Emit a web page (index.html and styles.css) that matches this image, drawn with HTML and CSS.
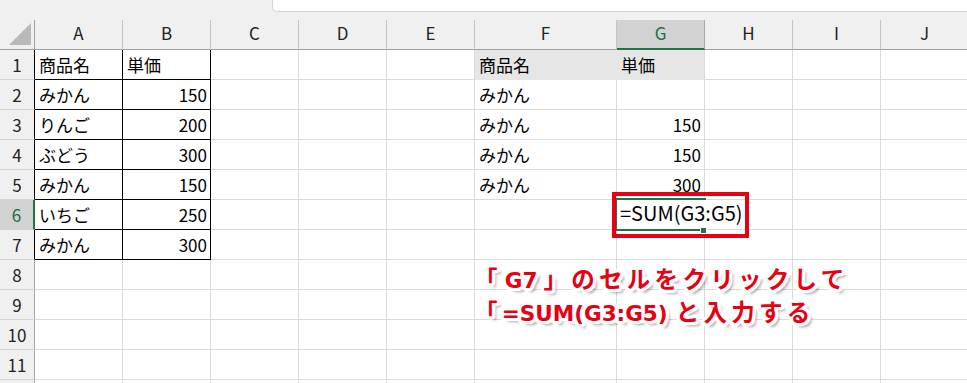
FILE: index.html
```html
<!DOCTYPE html>
<html lang="ja">
<head>
<meta charset="utf-8">
<title>Excel SUM</title>
<link rel="stylesheet" href="styles.css">
</head>
<body>
<div class="app">
  <div class="top"><div class="fbar"></div></div>
  <div class="sheet">
    <div class="corner"><svg class="selall" width="22" height="22" viewBox="0 0 22 22"><polygon points="0,22 22,22 22,0" fill="#b9b9b9"/></svg></div>
    <div class="ch">A</div><div class="ch">B</div><div class="ch">C</div><div class="ch">D</div><div class="ch">E</div><div class="ch">F</div><div class="ch sel">G</div><div class="ch">H</div><div class="ch">I</div><div class="ch">J</div>

    <div class="rh t">1</div><div class="c t">商品名</div><div class="c t">単価</div><div class="c"></div><div class="c"></div><div class="c"></div><div class="c f">商品名</div><div class="c f g1">単価</div><div class="c"></div><div class="c"></div><div class="c"></div>

    <div class="rh t">2</div><div class="c t">みかん</div><div class="c t n">150</div><div class="c"></div><div class="c"></div><div class="c"></div><div class="c">みかん</div><div class="c"></div><div class="c"></div><div class="c"></div><div class="c"></div>

    <div class="rh t">3</div><div class="c t">りんご</div><div class="c t n">200</div><div class="c"></div><div class="c"></div><div class="c"></div><div class="c">みかん</div><div class="c n">150</div><div class="c"></div><div class="c"></div><div class="c"></div>

    <div class="rh t">4</div><div class="c t">ぶどう</div><div class="c t n">300</div><div class="c"></div><div class="c"></div><div class="c"></div><div class="c">みかん</div><div class="c n">150</div><div class="c"></div><div class="c"></div><div class="c"></div>

    <div class="rh t">5</div><div class="c t">みかん</div><div class="c t n">150</div><div class="c"></div><div class="c"></div><div class="c"></div><div class="c">みかん</div><div class="c n">300</div><div class="c"></div><div class="c"></div><div class="c"></div>

    <div class="rh t sel">6</div><div class="c t">いちご</div><div class="c t n">250</div><div class="c"></div><div class="c"></div><div class="c"></div><div class="c"></div><div class="c formula">=SUM(G3:G5)</div><div class="c"></div><div class="c"></div><div class="c"></div>

    <div class="rh t">7</div><div class="c t">みかん</div><div class="c t n">300</div><div class="c"></div><div class="c"></div><div class="c"></div><div class="c"></div><div class="c"></div><div class="c"></div><div class="c"></div><div class="c"></div>

    <div class="rh">8</div><div class="c"></div><div class="c"></div><div class="c"></div><div class="c"></div><div class="c"></div><div class="c"></div><div class="c"></div><div class="c"></div><div class="c"></div><div class="c"></div>

    <div class="rh">9</div><div class="c"></div><div class="c"></div><div class="c"></div><div class="c"></div><div class="c"></div><div class="c"></div><div class="c"></div><div class="c"></div><div class="c"></div><div class="c"></div>

    <div class="rh">10</div><div class="c"></div><div class="c"></div><div class="c"></div><div class="c"></div><div class="c"></div><div class="c"></div><div class="c"></div><div class="c"></div><div class="c"></div><div class="c"></div>

    <div class="rh">11</div><div class="c"></div><div class="c"></div><div class="c"></div><div class="c"></div><div class="c"></div><div class="c"></div><div class="c"></div><div class="c"></div><div class="c"></div><div class="c"></div>

    <div class="rh"></div><div class="c"></div><div class="c"></div><div class="c"></div><div class="c"></div><div class="c"></div><div class="c"></div><div class="c"></div><div class="c"></div><div class="c"></div><div class="c"></div>
  </div>

  <div class="active"></div>
  <div class="redbox"></div>

  <div class="note">
    <div class="line">「<span class="lat g7">G7</span>」のセルをクリックして</div>
    <div class="line">「<span class="lat sum">=SUM(G3:G5)</span>と入力する</div>
  </div>
</div>
</body>
</html>
```

FILE: styles.css
```css
html, body {
  margin: 0;
  padding: 0;
  background: #ffffff;
  overflow: hidden;
}

.app {
  position: relative;
  width: 967px;
  height: 383px;
  overflow: hidden;
  font-family: "Noto Sans CJK JP", "Noto Sans", sans-serif;
  color: #000;
}

.top {
  height: 20px;
  background: #f0f0f0;
}

.fbar {
  margin-left: 272px;
  height: 12px;
  box-sizing: border-box;
  background: #ffffff;
  border-left: 1px solid #d4d4d4;
  border-bottom: 1px solid #d4d4d4;
  border-bottom-left-radius: 5px;
}

.sheet {
  display: grid;
  grid-template-columns: 35px repeat(5, 88px) 142px repeat(4, 88px);
  grid-auto-rows: 30px;
  background: #ffffff;
}

.sheet > div {
  box-sizing: border-box;
  border-right: 1px solid #dadada;
  border-bottom: 1px solid #dadada;
  font-size: 17px;
  line-height: 29px;
  white-space: nowrap;
  overflow: hidden;
}

.corner {
  background: #f0f0f0;
  border-right-color: #9f9f9f !important;
  border-bottom-color: #9f9f9f !important;
  display: flex;
  align-items: flex-start;
}

.selall {
  margin: 3px 0 0 9px;
  display: block;
}

.ch {
  background: #f0f0f0;
  text-align: center;
  color: #222;
  line-height: 25px !important;
  border-right-color: #c4c4c4 !important;
  border-bottom-color: #9f9f9f !important;
}

.ch.sel {
  background: #d2d2d2;
  color: #1d6b40;
  border-bottom: 2px solid #217346 !important;
  border-right-color: #a8a8a8 !important;
}

.rh {
  background: #f0f0f0;
  text-align: center;
  color: #222;
  border-right-color: #a6a6a6 !important;
  border-bottom-color: #d4d4d4 !important;
}

.rh.t {
  border-right-color: #000 !important;
}

.rh.sel {
  background: #d2d2d2;
  color: #1d6b40;
  border-right: 2px solid #217346 !important;
}

.c {
  padding: 0 3px 0 4px;
}

.c.n {
  text-align: right;
}

.c.t {
  border-right-color: #000;
  border-bottom-color: #000;
}

.c.f {
  background: #e7e6e6;
  border-right-color: #e7e6e6;
  border-bottom-color: #e7e6e6;
}

.c.f.g1 {
  border-right-color: #dadada;
}

.c.formula {
  overflow: visible;
  font-size: 20px;
  line-height: 26px;
  border-right-color: #ffffff;
  padding-left: 3px;
}

.active {
  position: absolute;
  left: 615px;
  top: 198px;
  width: 91px;
  height: 33px;
  box-sizing: border-box;
  border-top: 2px solid #217346;
  border-bottom: 2px solid #217346;
  border-left: 2px solid #217346;
}

.active::after {
  content: "";
  position: absolute;
  right: 0;
  bottom: -4px;
  width: 5px;
  height: 5px;
  background: #217346;
  outline: 1px solid #fff;
}

.redbox {
  position: absolute;
  left: 612px;
  top: 192px;
  width: 137px;
  height: 46px;
  box-sizing: border-box;
  border: 4px solid #e60012;
}

.note {
  position: absolute;
  left: 474px;
  top: 262px;
  color: #e60012;
  font-family: "Noto Sans CJK JP", "Noto Sans", sans-serif;
  font-weight: 700;
  font-size: 23.5px;
  line-height: 33px;
  letter-spacing: 4.3px;
  white-space: nowrap;
  text-shadow:
    3px 0 0 #fff, -3px 0 0 #fff, 0 3px 0 #fff, 0 -3px 0 #fff,
    2px 2px 0 #fff, -2px 2px 0 #fff, 2px -2px 0 #fff, -2px -2px 0 #fff,
    3px 1.5px 0 #fff, -3px 1.5px 0 #fff, 3px -1.5px 0 #fff, -3px -1.5px 0 #fff,
    1.5px 3px 0 #fff, -1.5px 3px 0 #fff, 1.5px -3px 0 #fff, -1.5px -3px 0 #fff,
    4px 4px 3px rgba(0, 0, 0, 0.35);
}

.line {
  height: 33px;
}

.lat {
  font-family: "DejaVu Sans", "Noto Sans", sans-serif;
  font-size: 21.5px;
  letter-spacing: 0;
}

.g7 {
  margin-left: 3px;
  margin-right: 6px;
}

.sum {
  margin-right: 8px;
}
```
